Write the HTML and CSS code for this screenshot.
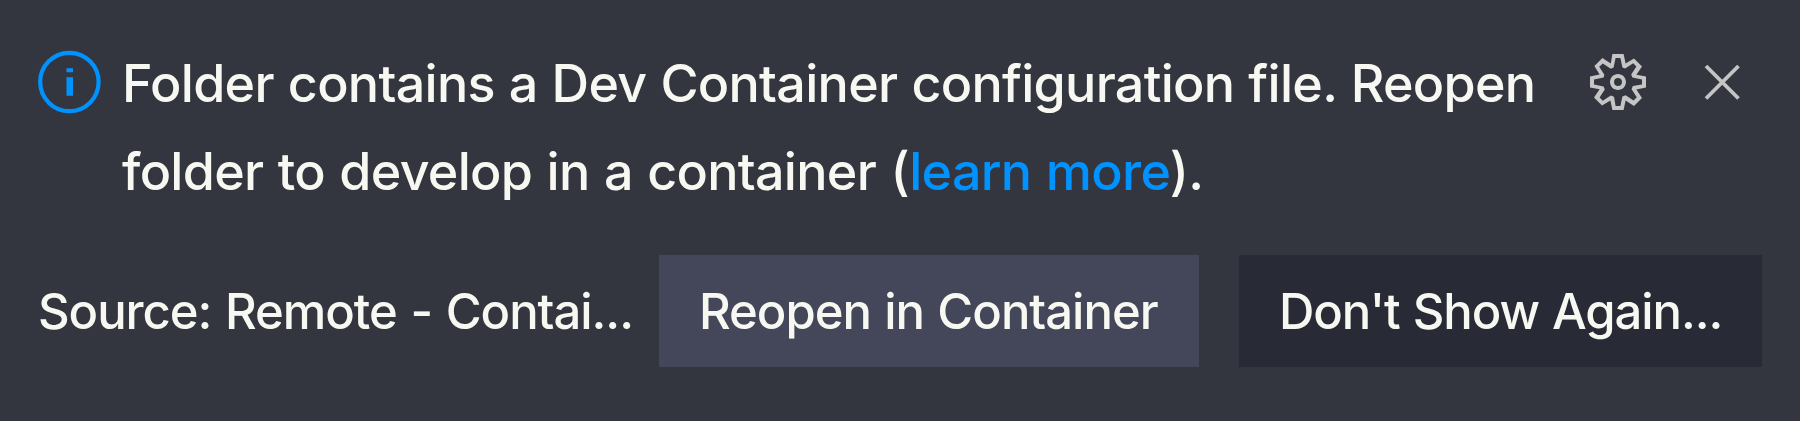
FILE: index.html
```html
<!DOCTYPE html>
<html lang="en">
<head>
<meta charset="utf-8">
<title>Notification</title>
<link rel="stylesheet" href="styles.css">
</head>
<body>
<div class="notification">
  <div class="main-row">
    <svg class="info-icon" viewBox="0 0 64 64" aria-hidden="true">
      <circle cx="31.400" cy="32" r="29.200" fill="none" stroke="currentColor" stroke-width="4.200"/>
      <path fill="currentColor" d="M28.500 18.200h6.500v4h-6.500zM28.500 27.200h6.500v18.500h-6.500z"/>
    </svg>
    <p class="message"><span class="line line-first">Folder contains a Dev Container configuration file. Reopen</span><span class="line line-second">folder to develop in a container (<a class="link">learn more</a>).</span></p>
    <div class="toolbar">
      <svg class="tool-icon" viewBox="0 0 16 16" aria-hidden="true"><path fill="currentColor" fill-rule="evenodd" d="M9.1 4.4L8.6 2H7.4l-.5 2.4-.7.3-2-1.3-.9.8 1.3 2-.2.7-2.4.5v1.2l2.4.5.3.8-1.3 2 .8.8 2-1.3.8.3.4 2.3h1.2l.5-2.4.8-.3 2 1.3.8-.8-1.3-2 .3-.8 2.3-.4V7.4l-2.4-.5-.3-.8 1.3-2-.8-.8-2 1.3-.7-.2zM9.4 1l.5 2.4L12 2.1l2 2-1.4 2.1 2.4.4v2.8l-2.4.5L14 12l-2 2-2.1-1.4-.5 2.4H6.6l-.5-2.4L4 13.9l-2-2 1.4-2.1L1 9.4V6.6l2.4-.5L2.1 4l2-2 2.1 1.4.4-2.4h2.8zm.6 7c0 1.1-.9 2-2 2s-2-.9-2-2 .9-2 2-2 2 .9 2 2zM8 9c.6 0 1-.4 1-1s-.4-1-1-1-1 .4-1 1 .4 1 1 1z"/></svg>
      <svg class="tool-icon" viewBox="0 0 64 64" aria-hidden="true"><path fill="none" stroke="currentColor" stroke-width="3.800" d="M16 16l32.500 32.500M48.500 16L16 48.500"/></svg>
    </div>
  </div>
  <div class="footer-row">
    <span class="source">Source: Remote - Contai...</span>
    <button class="button primary"><span class="label-reopen">Reopen in Container</span></button>
    <button class="button secondary"><span class="label-dismiss">Don't Show Again...</span></button>
  </div>
</div>
</body>
</html>
```
FILE: styles.css
```css
* { box-sizing: border-box; }
body { margin: 0; background: #34363f; }
.notification {
  width: 1800px;
  height: 421px;
  padding: 39px 38px 0;
  background: #34363f;
  color: #f8f8f2;
  font-family: Inter, "Liberation Sans", sans-serif;
  font-size: 52px;
  font-weight: 500;
  line-height: 88px;
  white-space: nowrap;
}
.main-row { display: flex; height: 176px; }
.info-icon { width: 64px; height: 64px; margin-top: 11px; color: #0092ff; flex: none; }
.message { width: 1440px; margin: 0 0 0 20px; padding-top: 1px; flex: none; }
.line { display: block; letter-spacing: -0.7px; }
.line-first { word-spacing: 0.8px; }
.line-second { word-spacing: 1.2px; }
.link { color: #0092ff; }
.toolbar { display: flex; gap: 40px; margin: 11px 0 0 24px; color: #c5c5c5; }
.tool-icon { width: 64px; height: 64px; flex: none; }
.footer-row { display: flex; margin-top: 40px; height: 112px; line-height: 114px; font-size: 49px; }
.source { width: 621px; flex: none; letter-spacing: -1.05px; word-spacing: 1.7px; }
.label-reopen { letter-spacing: -1px; word-spacing: 1.2px; }
.label-dismiss { letter-spacing: -1.1px; word-spacing: 1.2px; }
.button {
  height: 112px;
  padding: 0 0 0 40px;
  border: 0;
  color: inherit;
  font: inherit;
  text-align: left;
  flex: none;
}
.primary { width: 540px; background: #44475a; }
.secondary { width: 523px; margin-left: 40px; background: #282a36; }
```
